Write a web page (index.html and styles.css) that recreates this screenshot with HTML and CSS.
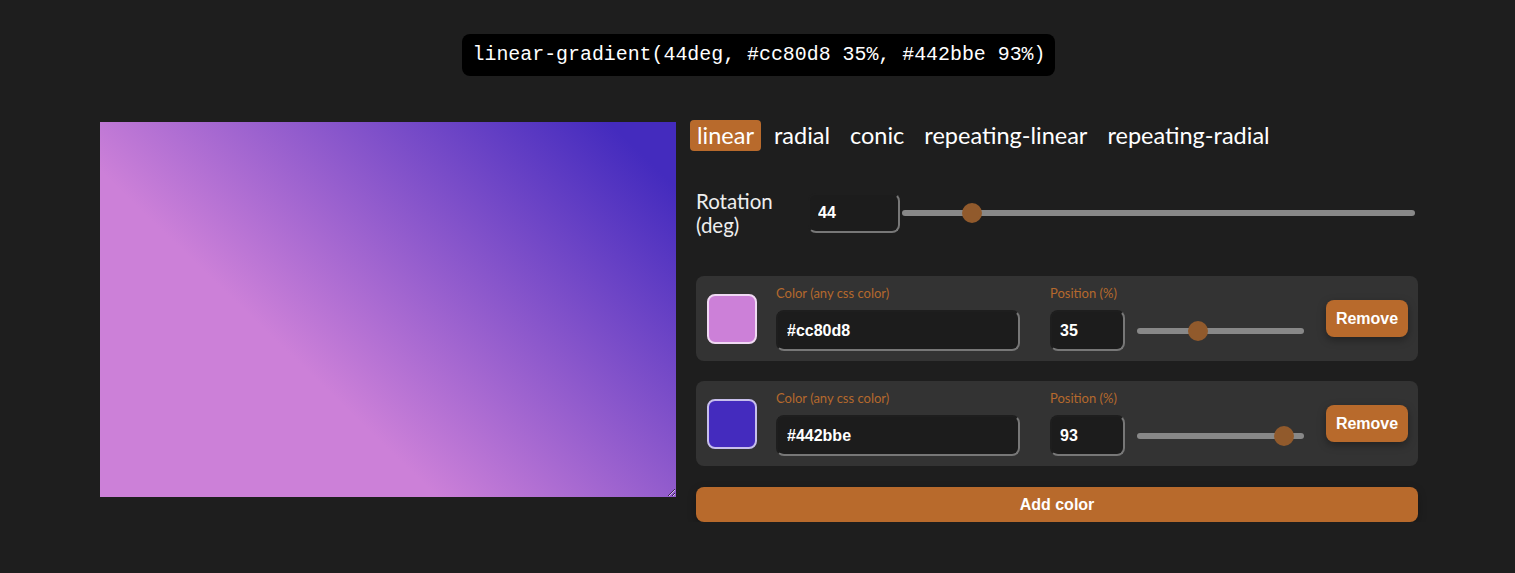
FILE: index.html
```html
<!DOCTYPE html>
<html>
<head>
<meta charset="utf-8">
<link rel="stylesheet" href="styles.css">
</head>
<body>
<div class="page">
  <div class="code">linear-gradient(44deg, #cc80d8 35%, #442bbe 93%)</div>
  <div class="main">
    <div class="preview" style="background: linear-gradient(44deg, #cc80d8 35%, #442bbe 93%);"></div>
    <div class="panel">
      <div class="tabs">
        <button class="tab active">linear</button>
        <button class="tab">radial</button>
        <button class="tab">conic</button>
        <button class="tab">repeating-linear</button>
        <button class="tab">repeating-radial</button>
      </div>
      <div class="rotation">
        <label class="rot-label">Rotation<br>(deg)</label>
        <input class="field rot-input" type="text" value="44">
        <input class="range rot-range" type="range" min="0" max="360" value="44">
      </div>
      <div class="stop">
        <div class="swatch" style="--c:#cc80d8;"></div>
        <div class="group">
          <div class="lbl">Color (any css color)</div>
          <input class="field color-input" type="text" value="#cc80d8">
        </div>
        <div class="group">
          <div class="lbl">Position (%)</div>
          <div class="pos-row">
            <input class="field pos-input" type="text" value="35">
            <input class="range pos-range" type="range" min="0" max="100" value="35">
          </div>
        </div>
        <button class="btn remove">Remove</button>
      </div>
      <div class="stop">
        <div class="swatch" style="--c:#442bbe;"></div>
        <div class="group">
          <div class="lbl">Color (any css color)</div>
          <input class="field color-input" type="text" value="#442bbe">
        </div>
        <div class="group">
          <div class="lbl">Position (%)</div>
          <div class="pos-row">
            <input class="field pos-input" type="text" value="93">
            <input class="range pos-range" type="range" min="0" max="100" value="93">
          </div>
        </div>
        <button class="btn remove">Remove</button>
      </div>
      <button class="btn add">Add color</button>
    </div>
  </div>
</div>
</body>
</html>
```
FILE: styles.css
```css
* { box-sizing: border-box; }
html, body { margin: 0; padding: 0; }
body {
  background: #1e1e1e;
  color: #fff;
  font-family: "Lato", "Noto Sans", sans-serif;
}
.page {
  display: flex;
  flex-direction: column;
  align-items: center;
  padding-top: 34px;
}
.code {
  background: #000;
  color: #fff;
  font-family: "Liberation Mono", monospace;
  font-size: 19.9px;
  line-height: 42px;
  height: 42px;
  padding: 0 10px 0 11px;
  border-radius: 8px;
  margin-left: 2px;
}
.main {
  display: flex;
  align-items: flex-start;
  gap: 14px;
  margin-top: 44px;
  margin-left: 3px;
}
.preview {
  width: 576px;
  height: 375px;
  margin-top: 2px;
  resize: both;
  overflow: hidden;
}
.panel {
  width: 728px;
  display: flex;
  flex-direction: column;
  padding-left: 6px;
}
.tabs {
  display: flex;
  gap: 6px;
  margin-left: -6px;
}
.tab {
  background: none;
  border: none;
  color: #fff;
  font-family: "Lato", "Noto Sans", sans-serif;
  font-size: 23.5px;
  height: 31px;
  line-height: 29px;
  padding: 0 7px;
  border-radius: 4px;
}
.tab.active { background: #b86a2c; }
.rotation {
  display: flex;
  align-items: center;
  margin-top: 39px;
  height: 45px;
}
.rot-label {
  font-size: 20.5px;
  line-height: 24px;
  width: 112px;
  color: #eee;
}
.field {
  background: #1c1c1c;
  color: #fff;
  font-family: "Liberation Sans", Arial, sans-serif;
  font-weight: bold;
  font-size: 16px;
  border: 2px solid;
  border-color: #1e1e1e #777 #777 #1e1e1e;
  border-radius: 8px;
  outline: none;
}
.rot-input {
  width: 92px;
  height: 40px;
  padding: 0 8px;
}
.range {
  -webkit-appearance: none;
  appearance: none;
  background: transparent;
  height: 20px;
  margin: 0;
}
.range::-webkit-slider-runnable-track {
  height: 6px;
  background: #888;
  border-radius: 3px;
}
.range::-webkit-slider-thumb {
  -webkit-appearance: none;
  width: 20px;
  height: 20px;
  border-radius: 50%;
  background: #915a2c;
  margin-top: -7px;
}
.rot-range {
  width: 513px;
  margin-left: 2px;
}
.stop {
  display: flex;
  align-items: center;
  background: #333;
  border-radius: 8px;
  height: 85px;
  padding: 0 10px 0 11px;
  margin-top: 41px;
}
.stop + .stop { margin-top: 20px; }
.swatch {
  width: 50px;
  height: 50px;
  border-radius: 8px;
  background: var(--c);
  border: 2px solid color-mix(in srgb, var(--c) 30%, white);
  flex: none;
}
.group {
  display: flex;
  flex-direction: column;
  margin-left: 19px;
}
.group + .group { margin-left: 30px; }
.lbl {
  color: #b5692d;
  font-size: 13px;
  line-height: 15px;
  margin-bottom: 9px;
}
.color-input {
  width: 244px;
  height: 41px;
  padding: 0 9px;
}
.pos-row {
  display: flex;
  align-items: center;
}
.pos-input {
  width: 75px;
  height: 41px;
  padding: 0 8px;
}
.pos-range {
  width: 167px;
  margin-left: 12px;
}
.btn {
  background: #b86a2c;
  color: #fff;
  border: none;
  border-radius: 8px;
  font-family: "Liberation Sans", Arial, sans-serif;
  font-weight: bold;
  font-size: 16px;
}
.remove {
  margin-left: auto;
  width: 82px;
  height: 37px;
  padding: 0;
  box-shadow: 0 3px 8px rgba(0,0,0,0.35);
}
.add {
  margin-top: 21px;
  height: 35px;
  width: 100%;
  box-shadow: 0 3px 8px rgba(0,0,0,0.25);
}
```
